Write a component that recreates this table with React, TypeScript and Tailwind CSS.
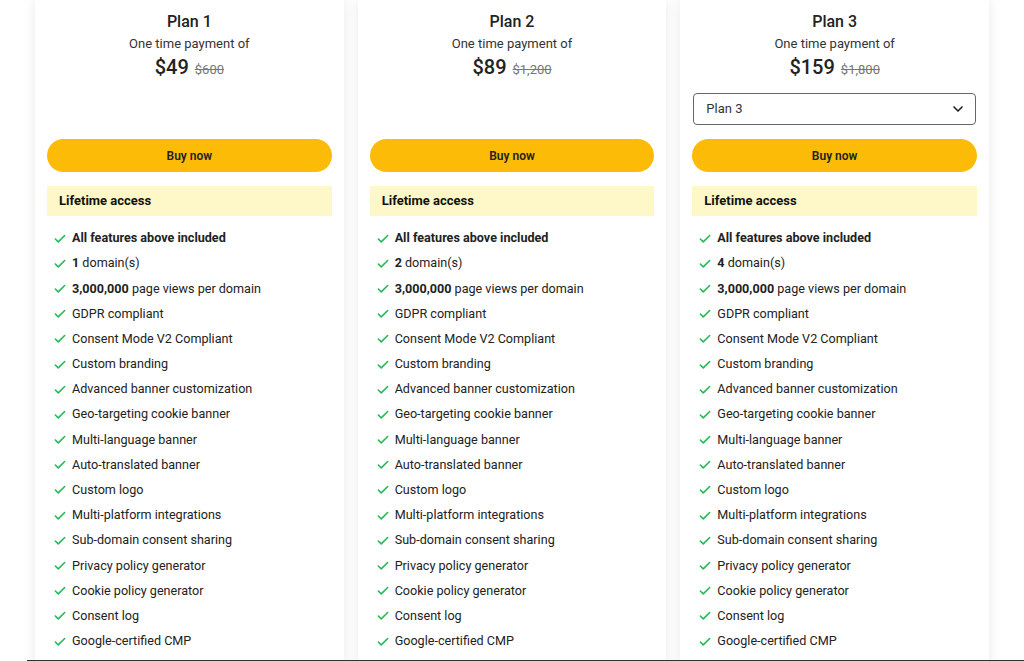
import { Check, ChevronDown } from "lucide-react";

interface Plan {
    name: string;
    price: string;
    oldPrice: string;
    domains: number;
    hasSelect?: boolean;
}

const plans: Plan[] = [
    { name: "Plan 1", price: "$49", oldPrice: "$600", domains: 1 },
    { name: "Plan 2", price: "$89", oldPrice: "$1,200", domains: 2 },
    { name: "Plan 3", price: "$159", oldPrice: "$1,800", domains: 4, hasSelect: true },
];

const features = [
    "GDPR compliant",
    "Consent Mode V2 Compliant",
    "Custom branding",
    "Advanced banner customization",
    "Geo-targeting cookie banner",
    "Multi-language banner",
    "Auto-translated banner",
    "Custom logo",
    "Multi-platform integrations",
    "Sub-domain consent sharing",
    "Privacy policy generator",
    "Cookie policy generator",
    "Consent log",
    "Google-certified CMP",
];

const FeatureRow = ({ children }: { children: React.ReactNode }) => (
    <li className="flex items-center h-[25.2px] pl-[6px]">
        <Check className="w-[14px] h-[14px] text-[#27b957] mr-[5px] shrink-0" strokeWidth={2.75} />
        <span className="text-[12.6px] text-[#222]">{children}</span>
    </li>
);

const PlanCard = ({ plan }: { plan: Plan }) => {
    return (
        <div className="bg-white shadow-[0_0_12px_rgba(0,0,0,0.09)] flex flex-col pt-[10px] px-3 pb-10">
            <h2 className="text-center text-[16px] leading-[24px] font-medium text-[#222]">{plan.name}</h2>
            <p className="text-center text-[13px] leading-[20px] text-[#333]">One time payment of</p>
            <div className="flex items-baseline justify-center gap-[6px] leading-[26px]">
                <span className="text-[20px] font-medium text-[#222]">{plan.price}</span>
                <span className="text-[13px] text-[#777] line-through">{plan.oldPrice}</span>
            </div>

            {/* only the last plan has the picker, others keep the gap */}
            <div className="mt-[10px] h-8 px-px">
                {plan.hasSelect && (
                    <div className="h-8 border border-[#666] rounded-[4px] flex items-center justify-between pl-3 pr-[9px]">
                        <span className="text-[13px] text-[#333]">{plan.name}</span>
                        <ChevronDown className="w-4 h-4 text-[#222]" strokeWidth={2.5} />
                    </div>
                )}
            </div>

            <button className="mt-[14px] h-[33px] w-full rounded-full bg-[#fcbb06] text-[12px] font-semibold text-[#222]">
                Buy now
            </button>

            <div className="mt-[14px] h-[30px] bg-[#fef8c9] flex items-center px-3">
                <span className="text-[13px] font-bold text-[#111]">Lifetime access</span>
            </div>

            <ul className="mt-[10px]">
                <FeatureRow><b className="font-bold">All features above included</b></FeatureRow>
                <FeatureRow><b className="font-bold">{plan.domains}</b> domain(s)</FeatureRow>
                <FeatureRow><b className="font-bold">3,000,000</b> page views per domain</FeatureRow>
                {features.map((f) => (
                    <FeatureRow key={f}>{f}</FeatureRow>
                ))}
            </ul>
        </div>
    );
};

export default function App() {
    return (
        <div className="h-[661px] bg-white flex flex-col overflow-hidden font-['Roboto',_'Liberation_Sans',_sans-serif]">
            <div className="flex-1 min-h-0 overflow-hidden px-[35px]">
                <div className="grid grid-cols-3 gap-[14px] items-start">
                    {plans.map((p) => (
                        <PlanCard key={p.name} plan={p} />
                    ))}
                </div>
            </div>
            <div className="h-px ml-[27px] bg-[#333]" />
        </div>
    );
}
